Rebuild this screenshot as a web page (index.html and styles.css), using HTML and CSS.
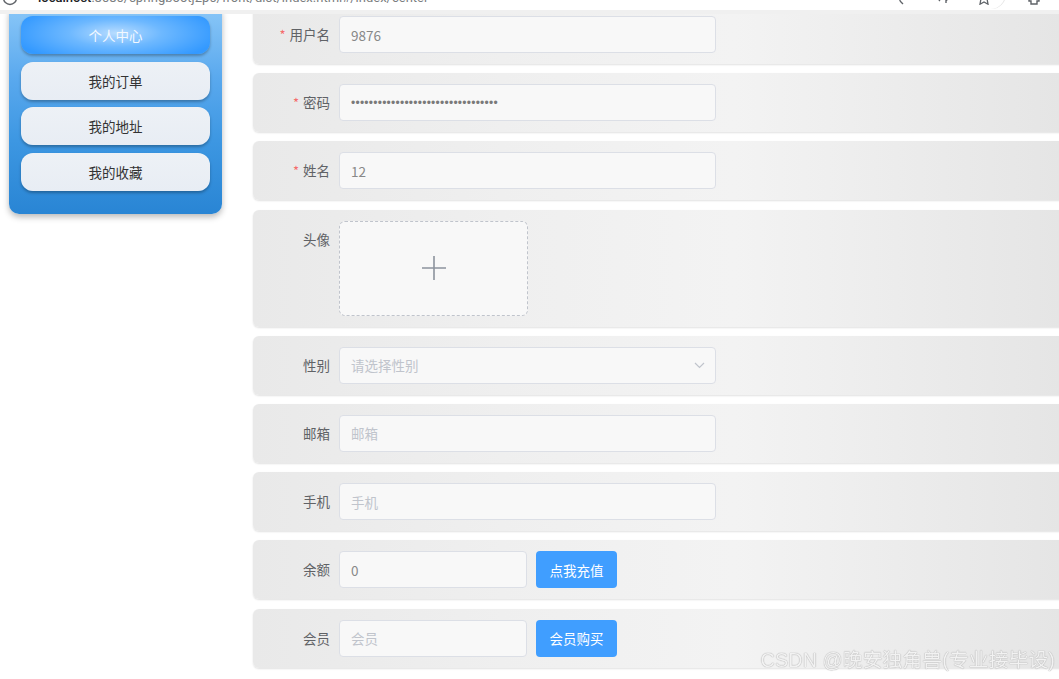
FILE: index.html
```html
<!DOCTYPE html>
<html lang="zh-CN">
<head>
<meta charset="utf-8">
<title>个人中心</title>
<link rel="stylesheet" href="styles.css">
</head>
<body>
<div class="toolbar">
  <div class="omnibox">
    <svg class="info" width="16" height="16" viewBox="0 0 16 16"><circle cx="8" cy="8" r="6.5" fill="none" stroke="#5f6368" stroke-width="1.4"/></svg>
    <span class="url"><b>localhost</b>:8080/springbootj2p6/front/dist/index.html#/index/center</span>
    <span class="tb-icons">
      <svg width="14" height="14" viewBox="0 0 14 14"><path d="M3 2v8M3 10l3 3" stroke="#5f6368" stroke-width="1.4" fill="none"/></svg>
      <svg width="14" height="14" viewBox="0 0 14 14"><path d="M2 10l4-6 4 6M9 4v8" stroke="#5f6368" stroke-width="1.4" fill="none"/></svg>
      <svg width="14" height="14" viewBox="0 0 14 14"><path d="M7 1l2 4 4.5.6-3.3 3.1.8 4.5L7 11 3 13.2l.8-4.5L.5 5.6 5 5z" stroke="#5f6368" stroke-width="1.3" fill="none"/></svg>
    </span>
  </div>
  <svg class="ext" width="16" height="16" viewBox="0 0 16 16"><path d="M3 6h3V3h4v3h3v4h-2v3H5v-3H3z" stroke="#5f6368" stroke-width="1.4" fill="none"/></svg>
</div>

<div class="page">
  <aside class="side">
    <div class="menu-item active">个人中心</div>
    <div class="menu-item">我的订单</div>
    <div class="menu-item">我的地址</div>
    <div class="menu-item">我的收藏</div>
  </aside>

  <form class="form">
    <div class="row">
      <label class="lbl"><span class="star">*</span>用户名</label>
      <input class="inp" type="text" value="9876">
    </div>
    <div class="row">
      <label class="lbl"><span class="star">*</span>密码</label>
      <input class="inp pwd" type="text" value="•••••••••••••••••••••••••••••••••">
    </div>
    <div class="row">
      <label class="lbl"><span class="star">*</span>姓名</label>
      <input class="inp" type="text" value="12">
    </div>
    <div class="row">
      <label class="lbl">头像</label>
      <div class="upload">
        <svg width="26" height="26" viewBox="0 0 26 26"><path d="M13 1v24M1 13h24" stroke="#8c939d" stroke-width="1.6"/></svg>
      </div>
    </div>
    <div class="row">
      <label class="lbl">性别</label>
      <div class="select">
        <input class="inp" type="text" placeholder="请选择性别" readonly>
        <svg class="chev" width="11" height="7" viewBox="0 0 11 7"><path d="M1 1l4.5 4.5L10 1" stroke="#c0c4cc" stroke-width="1.2" fill="none"/></svg>
      </div>
    </div>
    <div class="row">
      <label class="lbl">邮箱</label>
      <input class="inp" type="text" placeholder="邮箱">
    </div>
    <div class="row">
      <label class="lbl">手机</label>
      <input class="inp" type="text" placeholder="手机">
    </div>
    <div class="row">
      <label class="lbl">余额</label>
      <input class="inp short" type="text" value="0">
      <button class="btn" type="button">点我充值</button>
    </div>
    <div class="row">
      <label class="lbl">会员</label>
      <input class="inp short" type="text" placeholder="会员">
      <button class="btn" type="button">会员购买</button>
    </div>
  </form>
</div>

<div class="watermark">CSDN @晚安独角兽(专业接毕设)</div>
</body>
</html>
```

FILE: styles.css
```css
html, body {
  margin: 0;
  padding: 0;
  background: #ffffff;
  overflow: hidden;
  font-family: "Noto Sans CJK SC", "Noto Sans", sans-serif;
}

.toolbar {
  position: fixed;
  top: 0;
  left: 0;
  right: 0;
  height: 10px;
  background: #ffffff;
  border-bottom: 4px solid #f0f0f0;
  z-index: 10;
  overflow: hidden;
}

.omnibox {
  position: absolute;
  left: 0;
  top: -20px;
  width: 1005px;
  height: 29px;
  background: #ffffff;
  border-radius: 0 15px 15px 0;
  box-shadow: 1px 0 0 #e6e6e6;
  display: flex;
  align-items: center;
}

.info {
  margin-left: 2px;
  margin-top: 6px;
}

.url {
  margin-left: 20px;
  margin-top: 6px;
  font-family: "Roboto", "Liberation Sans", sans-serif;
  font-size: 13px;
  color: #7a7d80;
  white-space: nowrap;
}

.url b {
  color: #202124;
  font-weight: 500;
}

.tb-icons {
  margin-left: auto;
  margin-right: 14px;
  margin-top: 6px;
  display: flex;
  gap: 26px;
}

.ext {
  position: absolute;
  right: 17px;
  top: -9px;
}

.page {
  display: flex;
  align-items: flex-start;
  gap: 31px;
  padding-left: 9px;
  padding-top: 4px;
}

.side {
  width: 213px;
  box-sizing: border-box;
  padding: 12px 12px 23px;
  border-radius: 10px;
  background: linear-gradient(180deg, #8cc8f8 0%, #5aa9ee 35%, #3d97e2 65%, #2985d4 100%);
  box-shadow: 0 3px 6px rgba(0, 0, 0, 0.28);
  display: flex;
  flex-direction: column;
  gap: 7.6px;
  flex-shrink: 0;
}

.menu-item {
  height: 38px;
  line-height: 38px;
  text-align: center;
  border-radius: 12px;
  background: linear-gradient(180deg, #edf1f6 0%, #e8edf4 100%);
  color: #333333;
  font-size: 13.5px;
  box-shadow: 0 2px 3px rgba(0, 0, 0, 0.28);
}

.menu-item.active {
  background: radial-gradient(ellipse 55% 80% at 50% 45%, #b7dcff 0%, #6db8ff 45%, #3399ff 100%);
  color: #f2f8ff;
}

.form {
  width: 830px;
  margin: 1px 0 0;
  flex-shrink: 0;
}

.row {
  display: flex;
  align-items: flex-start;
  padding: 11px 0;
  margin-bottom: 9.2px;
  border-radius: 6px;
  background: linear-gradient(90deg, #e9e9e9 0%, #efefef 30%, #f3f3f3 58%, #e4e4e4 100%);
  box-shadow: 0 1px 2px rgba(0, 0, 0, 0.12);
}

.lbl {
  width: 86px;
  box-sizing: border-box;
  padding-right: 9px;
  text-align: right;
  line-height: 37px;
  font-size: 13.5px;
  color: #606266;
  flex-shrink: 0;
}

.star {
  color: #f56c6c;
  margin-right: 4px;
  font-size: 13px;
}

.inp {
  width: 377px;
  height: 37px;
  box-sizing: border-box;
  border: 1px solid #dcdfe6;
  border-radius: 4px;
  background: #f8f8f8;
  padding: 0 11px;
  font-family: "Noto Sans CJK SC", "Noto Sans", sans-serif;
  font-size: 13.5px;
  color: #888888;
  outline: none;
  margin: 0;
}

.inp::placeholder {
  color: #c0c4cc;
}

.inp.pwd {
  font-family: "Liberation Sans", sans-serif;
  font-size: 12px;
  letter-spacing: 0.25px;
  color: #7a7a7a;
}

.inp.short {
  width: 188px;
}

.select {
  position: relative;
  width: 377px;
  height: 37px;
}

.chev {
  position: absolute;
  right: 11px;
  top: 15px;
}

.upload {
  width: 189px;
  height: 95px;
  box-sizing: border-box;
  border: 1px dashed #c0c4cc;
  border-radius: 6px;
  background: #f8f8f8;
  display: flex;
  align-items: center;
  justify-content: center;
}

.btn {
  margin-left: 9px;
  width: 81px;
  height: 37px;
  border: none;
  border-radius: 4px;
  background: #409eff;
  color: #ffffff;
  font-family: "Noto Sans CJK SC", "Noto Sans", sans-serif;
  font-size: 13.5px;
  padding: 0;
}

.watermark {
  position: fixed;
  right: 4px;
  bottom: 6px;
  font-family: "Liberation Sans", "Noto Sans CJK SC", sans-serif;
  font-size: 19.8px;
  color: #f2f2f2;
  text-shadow: 0 0 1px #a8a8a8, 0 0 1px #b4b4b4;
  letter-spacing: 0.1px;
  z-index: 5;
}
```
